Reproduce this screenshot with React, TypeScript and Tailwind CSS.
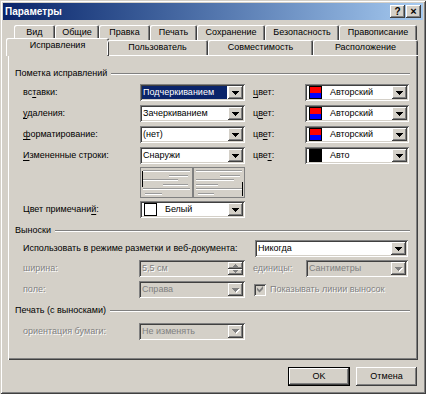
const raised = "shadow-[inset_-1px_-1px_#404040,inset_1px_1px_#fff,inset_-2px_-2px_#808080]";
const sunken = "shadow-[inset_1px_1px_#808080,inset_-1px_-1px_#fff,inset_2px_2px_#404040,inset_-2px_-2px_#d4d0c8]";
const dim = "text-[#808080] [text-shadow:1px_1px_#fff]";

function Arrow({ gray }: { gray?: boolean }) {
  return (
    <svg width="7" height="4" viewBox="0 0 7 4" className={gray ? "drop-shadow-[1px_1px_0_#fff]" : ""}>
      <path d="M0 0h7v1H0zM1 1h5v1H1zM2 2h3v1H2zM3 3h1v1H3z" fill={gray ? "#808080" : "#000"} />
    </svg>
  );
}

function DropBtn({ gray }: { gray?: boolean }) {
  return (
    <div className={`w-[15px] h-full flex items-center justify-center bg-[#d4d0c8] ${raised}`}>
      <Arrow gray={gray} />
    </div>
  );
}

function Swatch({ kind }: { kind: "author" | "black" | "white" }) {
  return (
    <div className="w-[13px] h-[13px] border border-black flex flex-col shrink-0">
      {kind === "author" && (
        <>
          <div className="flex-1 bg-[#ff0000]" />
          <div className="flex-1 bg-[#0000ff]" />
        </>
      )}
      {kind === "black" && <div className="flex-1 bg-black" />}
      {kind === "white" && <div className="flex-1 bg-white" />}
    </div>
  );
}

function Combo({
  w,
  text,
  disabled,
  selected,
  swatch,
}: {
  w: string;
  text: string;
  disabled?: boolean;
  selected?: boolean;
  swatch?: "author" | "black" | "white";
}) {
  return (
    <div className={`${w} h-[17px] p-[2px] flex ${sunken} ${disabled ? "bg-[#d4d0c8]" : "bg-white"}`}>
      <div className="flex-1 flex items-center min-w-0 pr-[1px]">
        {swatch && (
          <div className="ml-[2px] mr-[7px]">
            <Swatch kind={swatch} />
          </div>
        )}
        {selected ? (
          <span className="flex-1 h-full bg-[#0a246a] text-white pl-[1px] leading-[13px]">{text}</span>
        ) : (
          <span className={`pl-[1px] leading-[13px] ${disabled ? "text-[#808080]" : ""}`}>{text}</span>
        )}
      </div>
      <DropBtn gray={disabled} />
    </div>
  );
}

function Group({ title }: { title: string }) {
  return (
    <div className="flex items-center pl-[7px] pr-[8px] h-[13px]">
      <span>{title}</span>
      <div className="flex-1 ml-[4px] h-[2px] border-t border-t-[#808080] border-b border-b-white" />
    </div>
  );
}

function U({ children }: { children: string }) {
  return <span className="underline underline-offset-2">{children}</span>;
}

function PreviewPage({ side }: { side: "left" | "right" }) {
  const lines =
    side === "left"
      ? ["ml-[2px] mr-[2px]", "ml-[28px] mr-[4px]", "ml-[2px] mr-[14px]", "ml-[22px] mr-[4px]", "ml-[2px] mr-[2px]", "ml-[4px] mr-[30px]"]
      : ["ml-[2px] mr-[2px]", "ml-[26px] mr-[4px]", "ml-[2px] mr-[10px]", "ml-[2px] mr-[26px]", "ml-[2px] mr-[2px]", "ml-[4px] mr-[30px]"];
  return (
    <div className="flex-1 relative border border-[#808080] bg-[#d4d0c8] flex flex-col justify-between py-[2px]">
      {lines.map((l, i) => (
        <div key={i} className={`${l} h-[2px] border-t border-t-[#9a9a9a] border-b border-b-white`} />
      ))}
      {side === "left" ? (
        <div className="absolute left-[1px] top-[3px] w-px h-[16px] bg-black" />
      ) : (
        <div className="absolute right-[1px] top-[14px] w-px h-[14px] bg-black" />
      )}
    </div>
  );
}

const tabShadow = "shadow-[inset_1px_1px_#fff,inset_-1px_0_#404040,inset_-2px_0_#808080]";

function Tab({ label, w }: { label: string; w: string }) {
  return <div className={`${w} h-[15px] flex items-center justify-center rounded-t-[2px] ${tabShadow}`}>{label}</div>;
}

export default function App() {
  return (
    <div
      className="w-[426px] h-[394px] bg-[#d4d0c8] p-[3px] flex flex-col text-[9px] text-black leading-[13px] shadow-[inset_1px_1px_#d4d0c8,inset_-1px_-1px_#404040,inset_2px_2px_#fff,inset_-2px_-2px_#808080]"
      style={{ fontFamily: '"Liberation Sans", Arial, sans-serif' }}
    >
      {/* title bar */}
      <div className="h-[17px] flex items-center justify-between pl-[2px] pr-[2px] bg-gradient-to-r from-[#0a246a] to-[#a6caf0]">
        <span className="text-white font-bold text-[10px]">Параметры</span>
        <div className="flex gap-[1px]">
          <div className={`w-[15px] h-[13px] bg-[#d4d0c8] flex items-center justify-center font-bold text-[10px] ${raised}`}>?</div>
          <div className={`w-[15px] h-[13px] bg-[#d4d0c8] flex items-center justify-center font-bold text-[11px] ${raised}`}>×</div>
        </div>
      </div>

      {/* back row of tabs */}
      <div className="flex mt-[5px] ml-[11px]">
        <Tab label="Вид" w="w-[41px]" />
        <Tab label="Общие" w="w-[44px]" />
        <Tab label="Правка" w="w-[51px]" />
        <Tab label="Печать" w="w-[47px]" />
        <Tab label="Сохранение" w="w-[68px]" />
        <Tab label="Безопасность" w="w-[74px]" />
        <Tab label="Правописание" w="w-[78px]" />
      </div>

      {/* front row of tabs */}
      <div className="flex items-end h-[15px] ml-[5px] w-[410px] relative z-10">
        <div className={`w-[103px] -ml-[2px] -mr-[2px] h-[18px] -mb-[1px] pb-[3px] flex items-center justify-center bg-[#d4d0c8] rounded-t-[2px] ${tabShadow}`}>
          Исправления
        </div>
        <div className={`w-[101px] h-[15px] flex items-center justify-center rounded-t-[2px] ${tabShadow}`}>Пользователь</div>
        <div className={`w-[105px] h-[15px] flex items-center justify-center rounded-t-[2px] ${tabShadow}`}>Совместимость</div>
        <div className={`w-[105px] h-[15px] flex items-center justify-center rounded-t-[2px] ${tabShadow}`}>Расположение</div>
      </div>

      {/* panel */}
      <div className="ml-[5px] w-[410px] h-[305px] pt-[12px] shadow-[inset_1px_1px_#fff,inset_-1px_-1px_#404040,inset_-2px_-2px_#808080]">
        <Group title="Пометка исправлений" />

        {[
          { l: <>вс<U>т</U>авки:</>, v: "Подчеркиванием", sel: true, c: <><U>ц</U>вет:</>, cv: "Авторский", sw: "author" as const },
          { l: <><U>у</U>даления:</>, v: "Зачеркиванием", c: <>ц<U>в</U>ет:</>, cv: "Авторский", sw: "author" as const },
          { l: <><U>ф</U>орматирование:</>, v: "(нет)", c: <>цв<U>е</U>т:</>, cv: "Авторский", sw: "author" as const },
          { l: <><U>И</U>змененные строки:</>, v: "Снаружи", c: <>цве<U>т</U>:</>, cv: "Авто", sw: "black" as const },
        ].map((r, i) => (
          <div key={i} className="flex items-center h-[17px] pl-[15px] mt-[4px]">
            <div className="w-[117px]">{r.l}</div>
            <Combo w="w-[105px]" text={r.v} selected={r.sel} />
            <div className="w-[52px] ml-[8px]">{r.c}</div>
            <Combo w="w-[104px]" text={r.cv} swatch={r.sw} />
          </div>
        ))}

        <div className="flex h-[31px] mt-[3px] ml-[132px] w-[105px]">
          <PreviewPage side="left" />
          <PreviewPage side="right" />
        </div>

        <div className="flex items-center h-[17px] pl-[15px] mt-[3px]">
          <div className="w-[117px]">
            Цвет примечани<U>й</U>:
          </div>
          <Combo w="w-[105px]" text="Белый" swatch="white" />
        </div>

        <div className="mt-[6px]">
          <Group title="Выноски" />
        </div>

        <div className="flex items-center h-[17px] pl-[15px] mt-[3px]">
          <div className="w-[232px]">Использовать в режиме разметки и веб-документа:</div>
          <Combo w="w-[153px]" text="Никогда" />
        </div>

        <div className="flex items-center h-[17px] pl-[15px] mt-[3px]">
          <div className={`w-[116px] ${dim}`}>ширина:</div>
          <div className={`w-[106px] h-[17px] p-[2px] flex bg-[#d4d0c8] ${sunken}`}>
            <div className={`flex-1 pl-[1px] leading-[13px] ${dim}`}>5,5 см</div>
            <div className="w-[15px] flex flex-col">
              <div className={`flex-1 flex items-center justify-center ${raised}`}>
                <svg width="5" height="3" viewBox="0 0 5 3">
                  <path d="M2 0h1v1H2zM1 1h3v1H1zM0 2h5v1H0z" fill="#808080" />
                </svg>
              </div>
              <div className={`flex-1 flex items-center justify-center ${raised}`}>
                <svg width="5" height="3" viewBox="0 0 5 3">
                  <path d="M0 0h5v1H0zM1 1h3v1H1zM2 2h1v1H2z" fill="#808080" />
                </svg>
              </div>
            </div>
          </div>
          <div className={`w-[53px] ml-[8px] ${dim}`}>единицы:</div>
          <Combo w="w-[102px]" text="Сантиметры" disabled />
        </div>

        <div className="flex items-center h-[17px] pl-[15px] mt-[4px]">
          <div className={`w-[116px] ${dim}`}>поле:</div>
          <Combo w="w-[106px]" text="Справа" disabled />
          <div className={`ml-[9px] w-[12px] h-[12px] bg-[#d4d0c8] flex items-center justify-center ${sunken}`}>
            <svg width="7" height="7" viewBox="0 0 7 7">
              <path d="M6 0v3L2.5 6.5 0 4V1.5l2.5 2.5z" fill="#808080" />
            </svg>
          </div>
          <div className={`ml-[4px] ${dim}`}>Показывать линии выносок</div>
        </div>

        <div className="mt-[6px]">
          <Group title="Печать (с выносками)" />
        </div>

        <div className="flex items-center h-[18px] pl-[15px] mt-[5px]">
          <div className={`w-[116px] ${dim}`}>ориентация бумаги:</div>
          <Combo w="w-[106px]" text="Не изменять" disabled />
        </div>
      </div>

      {/* buttons */}
      <div className="flex justify-end gap-[6px] mt-[7px] mr-[6px]">
        <div className="w-[62px] h-[19px] border border-black">
          <div className={`w-full h-full bg-[#d4d0c8] flex items-center justify-center ${raised}`}>OK</div>
        </div>
        <div className={`w-[61px] h-[19px] bg-[#d4d0c8] flex items-center justify-center ${raised}`}>Отмена</div>
      </div>
    </div>
  );
}
